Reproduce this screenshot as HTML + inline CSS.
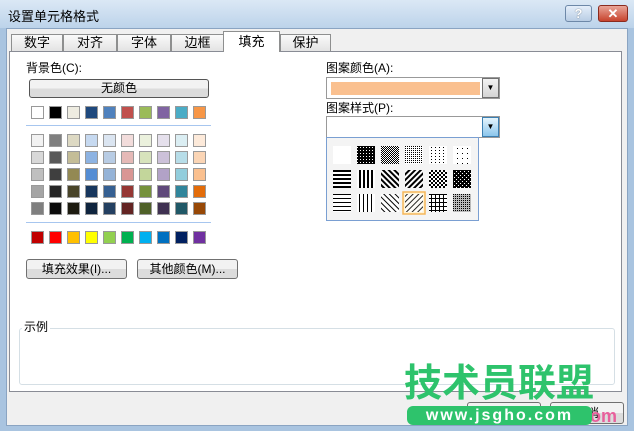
<!DOCTYPE html>
<html><head><meta charset="utf-8"><style>
*{margin:0;padding:0;box-sizing:border-box}
body{width:634px;height:431px;overflow:hidden;background:#a9c4e0;font-family:"Liberation Sans","Noto Sans CJK SC",sans-serif;font-size:12px;color:#000;position:relative}
.a{position:absolute}
#title{left:0;top:0;width:634px;height:28px;background:linear-gradient(#dbe8f5,#bcd3ea);}
#body{left:6px;top:28px;width:622px;height:398px;background:#f0f0f0;border:1px solid #8aa4c2}
.tab{position:absolute;top:34px;height:17px;border:1px solid #8e8f8f;border-bottom:none;background:linear-gradient(#fafafa,#e3e3e3);text-align:center;font-size:13px;line-height:16px}
.tab.sel{top:31px;height:21px;background:#fff;z-index:3;line-height:19px}
#panel{left:9px;top:51px;width:613px;height:341px;background:#fff;border:1px solid #898c95;z-index:2}
.grid{display:grid;grid-template-columns:repeat(10,13px);column-gap:5px;row-gap:4px}
.grid div{width:13px;height:13px;border:1px solid #9a9a9a}
.btn{border:1px solid #707070;border-radius:3px;background:linear-gradient(#f2f2f2 50%,#dcdcdc 50%);text-align:center;font-size:12px}
</style></head><body>
<div class="a" id="title"></div>
<div class="a" style="left:8px;top:6px;font-size:13px;color:#000">设置单元格格式</div>
<div class="a" style="left:565px;top:5px;width:27px;height:17px;border:1px solid #6d88a8;border-radius:3px;background:linear-gradient(#e4eefa,#b9cde4);text-align:center;font-weight:bold;color:#fff;line-height:15px;font-size:13px;text-shadow:0 0 1px #345">?</div>
<div class="a" style="left:598px;top:5px;width:30px;height:17px;border:1px solid #8a2a1e;border-radius:3px;background:linear-gradient(#e9a598,#c7432d);text-align:center;font-weight:bold;color:#fff;line-height:15px;font-size:13px">✕</div>
<div class="a" id="body"></div>
<div class="tab" style="left:11px;width:52px">数字</div>
<div class="tab" style="left:63px;width:54px">对齐</div>
<div class="tab" style="left:117px;width:54px">字体</div>
<div class="tab" style="left:171px;width:53px">边框</div>
<div class="tab sel" style="left:223px;width:57px">填充</div>
<div class="tab" style="left:280px;width:51px">保护</div>
<div class="a" id="panel">
 <div class="a" style="left:16px;top:7px">背景色(C):</div>
 <div class="a btn" style="left:19px;top:27px;width:180px;height:19px;line-height:17px;border-color:#555">无颜色</div>
 <div class="a" style="left:21px;top:54px;display:flex;gap:5px">
  <div style="width:13px;height:13px;border:1px solid #999;background:#fff"></div>
  <div style="width:13px;height:13px;border:1px solid #999;background:#000"></div>
  <div style="width:13px;height:13px;border:1px solid #999;background:#eeece1"></div>
  <div style="width:13px;height:13px;border:1px solid #999;background:#1f497d"></div>
  <div style="width:13px;height:13px;border:1px solid #999;background:#4f81bd"></div>
  <div style="width:13px;height:13px;border:1px solid #999;background:#c0504d"></div>
  <div style="width:13px;height:13px;border:1px solid #999;background:#9bbb59"></div>
  <div style="width:13px;height:13px;border:1px solid #999;background:#8064a2"></div>
  <div style="width:13px;height:13px;border:1px solid #999;background:#4bacc6"></div>
  <div style="width:13px;height:13px;border:1px solid #999;background:#f79646"></div>
 </div>
 <div class="a" style="left:16px;top:73px;width:185px;height:1px;background:#a7c6ef"></div>
 <div class="a grid" style="left:21px;top:82px">
  <div style="background:#f2f2f2"></div><div style="background:#7f7f7f"></div><div style="background:#ddd9c3"></div><div style="background:#c6d9f0"></div><div style="background:#dbe5f1"></div><div style="background:#f2dcdb"></div><div style="background:#ebf1dd"></div><div style="background:#e5e0ec"></div><div style="background:#dbeef3"></div><div style="background:#fdeada"></div>
  <div style="background:#d8d8d8"></div><div style="background:#595959"></div><div style="background:#c4bd97"></div><div style="background:#8db3e2"></div><div style="background:#b8cce4"></div><div style="background:#e5b9b7"></div><div style="background:#d7e3bc"></div><div style="background:#ccc1d9"></div><div style="background:#b7dde8"></div><div style="background:#fbd5b5"></div>
  <div style="background:#bfbfbf"></div><div style="background:#3f3f3f"></div><div style="background:#938953"></div><div style="background:#548dd4"></div><div style="background:#95b3d7"></div><div style="background:#d99694"></div><div style="background:#c3d69b"></div><div style="background:#b2a2c7"></div><div style="background:#92cddc"></div><div style="background:#fac08f"></div>
  <div style="background:#a5a5a5"></div><div style="background:#262626"></div><div style="background:#494429"></div><div style="background:#17365d"></div><div style="background:#366092"></div><div style="background:#953734"></div><div style="background:#76923c"></div><div style="background:#5f497a"></div><div style="background:#31859b"></div><div style="background:#e36c09"></div>
  <div style="background:#7f7f7f"></div><div style="background:#0c0c0c"></div><div style="background:#1d1b10"></div><div style="background:#0f243e"></div><div style="background:#244061"></div><div style="background:#632423"></div><div style="background:#4f6128"></div><div style="background:#3f3151"></div><div style="background:#205867"></div><div style="background:#974806"></div>
 </div>
 <div class="a" style="left:16px;top:170px;width:185px;height:1px;background:#a7c6ef"></div>
 <div class="a" style="left:21px;top:179px;display:flex;gap:5px">
  <div style="width:13px;height:13px;border:1px solid #999;background:#c00000"></div>
  <div style="width:13px;height:13px;border:1px solid #999;background:#f00"></div>
  <div style="width:13px;height:13px;border:1px solid #999;background:#ffc000"></div>
  <div style="width:13px;height:13px;border:1px solid #999;background:#ff0"></div>
  <div style="width:13px;height:13px;border:1px solid #999;background:#92d050"></div>
  <div style="width:13px;height:13px;border:1px solid #999;background:#00b050"></div>
  <div style="width:13px;height:13px;border:1px solid #999;background:#00b0f0"></div>
  <div style="width:13px;height:13px;border:1px solid #999;background:#0070c0"></div>
  <div style="width:13px;height:13px;border:1px solid #999;background:#002060"></div>
  <div style="width:13px;height:13px;border:1px solid #999;background:#7030a0"></div>
 </div>
 <div class="a btn" style="left:16px;top:207px;width:101px;height:20px;line-height:18px">填充效果(I)...</div>
 <div class="a btn" style="left:127px;top:207px;width:101px;height:20px;line-height:18px">其他颜色(M)...</div>
 <div class="a" style="left:316px;top:7px">图案颜色(A):</div>
 <div class="a" style="left:316px;top:25px;width:174px;height:22px;border:1px solid #999;background:#fff">
  <div class="a" style="left:4px;top:4px;width:149px;height:13px;background:#fac08f"></div>
  <div class="a" style="left:155px;top:0;width:17px;height:20px;border:1px solid #707070;background:linear-gradient(#f2f2f2,#d5d5d5);font-size:8px;text-align:center;line-height:18px">▼</div>
 </div>
 <div class="a" style="left:316px;top:47px">图案样式(P):</div>
 <div class="a" style="left:316px;top:64px;width:174px;height:22px;border:1px solid #999;background:#fff">
  <div class="a" style="left:155px;top:0;width:17px;height:20px;border:1px solid #3c7fb1;background:linear-gradient(#e5f4fc,#8cc6ec);font-size:8px;text-align:center;line-height:18px">▼</div>
 </div>
 <div class="a" style="left:316px;top:85px;width:153px;height:84px;border:1px solid #7a9fd2;background:#f4f4f4">
  <svg width="151" height="82" style="position:absolute;left:0;top:0">
   <defs>
    <pattern id="p1" width="3" height="3" patternUnits="userSpaceOnUse"><rect width="3" height="3" fill="#000"/><rect width="1" height="1" fill="#fff"/></pattern>
    <pattern id="p2" width="2" height="2" patternUnits="userSpaceOnUse"><rect width="2" height="2" fill="#fff"/><rect width="1" height="1" fill="#000"/><rect x="1" y="1" width="1" height="1" fill="#000"/></pattern>
    <pattern id="p3" width="2" height="2" patternUnits="userSpaceOnUse"><rect width="2" height="2" fill="#fff"/><rect width="1" height="1" fill="#000"/></pattern>
    <pattern id="p4" width="4" height="3" patternUnits="userSpaceOnUse"><rect width="4" height="3" fill="#fff"/><rect width="1" height="1" fill="#000"/></pattern>
    <pattern id="p5" width="5" height="5" patternUnits="userSpaceOnUse"><rect width="5" height="5" fill="#fff"/><rect width="1" height="1" fill="#000"/></pattern>
    <pattern id="h1" width="4" height="4" patternUnits="userSpaceOnUse"><rect width="4" height="4" fill="#fff"/><rect width="4" height="2" fill="#000"/></pattern>
    <pattern id="v1" width="4" height="4" patternUnits="userSpaceOnUse"><rect width="4" height="4" fill="#fff"/><rect width="2" height="4" fill="#000"/></pattern>
    <pattern id="d1" width="4" height="4" patternUnits="userSpaceOnUse" patternTransform="rotate(-45)"><rect width="4" height="4" fill="#fff"/><rect width="2" height="4" fill="#000"/></pattern>
    <pattern id="d2" width="4" height="4" patternUnits="userSpaceOnUse" patternTransform="rotate(45)"><rect width="4" height="4" fill="#fff"/><rect width="2" height="4" fill="#000"/></pattern>
    <pattern id="c1" width="4" height="4" patternUnits="userSpaceOnUse"><rect width="4" height="4" fill="#fff"/><rect width="2" height="2" fill="#000"/><rect x="2" y="2" width="2" height="2" fill="#000"/></pattern>
    <pattern id="c2" width="4" height="4" patternUnits="userSpaceOnUse"><rect width="4" height="4" fill="#000"/><rect x="1" y="1" width="1" height="1" fill="#fff"/><rect x="3" y="3" width="1" height="1" fill="#fff"/></pattern>
    <pattern id="h2" width="4" height="4" patternUnits="userSpaceOnUse"><rect width="4" height="4" fill="#fff"/><rect width="4" height="1" fill="#000"/></pattern>
    <pattern id="v2" width="4" height="4" patternUnits="userSpaceOnUse"><rect width="4" height="4" fill="#fff"/><rect width="1" height="4" fill="#000"/></pattern>
    <pattern id="d3" width="4" height="4" patternUnits="userSpaceOnUse" patternTransform="rotate(-45)"><rect width="4" height="4" fill="#fff"/><rect width="1" height="4" fill="#000"/></pattern>
    <pattern id="d4" width="4" height="4" patternUnits="userSpaceOnUse" patternTransform="rotate(45)"><rect width="4" height="4" fill="#fff"/><rect width="1" height="4" fill="#000"/></pattern>
    <pattern id="g1" width="4" height="4" patternUnits="userSpaceOnUse"><rect width="4" height="4" fill="#fff"/><rect width="4" height="1" fill="#000"/><rect width="1" height="4" fill="#000"/></pattern>
    <pattern id="g2" width="2" height="2" patternUnits="userSpaceOnUse"><rect width="2" height="2" fill="#bbb"/><rect width="1" height="1" fill="#000"/></pattern>
   </defs>
   <rect x="6" y="8" width="18" height="18" fill="#fff"/>
   <rect x="30" y="8" width="18" height="18" fill="url(#p1)"/>
   <rect x="54" y="8" width="18" height="18" fill="url(#p2)"/>
   <rect x="78" y="8" width="18" height="18" fill="url(#p3)"/>
   <rect x="102" y="8" width="18" height="18" fill="url(#p4)"/>
   <rect x="126" y="8" width="18" height="18" fill="url(#p5)"/>
   <rect x="6" y="32" width="18" height="18" fill="url(#h1)"/>
   <rect x="30" y="32" width="18" height="18" fill="url(#v1)"/>
   <rect x="54" y="32" width="18" height="18" fill="url(#d1)"/>
   <rect x="78" y="32" width="18" height="18" fill="url(#d2)"/>
   <rect x="102" y="32" width="18" height="18" fill="url(#c1)"/>
   <rect x="126" y="32" width="18" height="18" fill="url(#c2)"/>
   <rect x="6" y="56" width="18" height="18" fill="url(#h2)"/>
   <rect x="30" y="56" width="18" height="18" fill="url(#v2)"/>
   <rect x="54" y="56" width="18" height="18" fill="url(#d3)"/>
   <rect x="76" y="54" width="22" height="22" fill="#fff4d6" stroke="#f5b65a" stroke-width="1.5"/>
   <rect x="78" y="56" width="18" height="18" fill="url(#d4)" opacity=".85"/>
   <rect x="102" y="56" width="18" height="18" fill="url(#g1)"/>
   <rect x="126" y="56" width="18" height="18" fill="url(#g2)"/>
  </svg>
 </div>
 <div class="a" style="left:9px;top:276px;width:596px;height:57px;border:1px solid #d5dfe5;border-radius:3px"></div>
 <div class="a" style="left:12px;top:266px;background:#fff;padding:0 2px">示例</div>
</div>
<div class="a btn" style="left:467px;top:402px;width:74px;height:22px;line-height:20px">确定</div>
<div class="a btn" style="left:550px;top:402px;width:74px;height:22px;line-height:20px">取消</div>
<div class="a" style="left:404px;top:360px;font-size:38px;font-weight:bold;color:#2ec36c;line-height:40px;font-family:'Noto Sans CJK SC',sans-serif;z-index:5">技术员联盟</div>
<div class="a" style="left:407px;top:406px;width:185px;height:19px;background:#2ec36c;border-radius:6px;color:#fff;font-weight:bold;font-size:16px;line-height:19px;text-align:center;letter-spacing:2px;z-index:5">www.jsgho.com</div>
<div class="a" style="left:590px;top:406px;color:#e8609c;font-size:18px;font-weight:bold;z-index:4">om</div>
</body></html>
